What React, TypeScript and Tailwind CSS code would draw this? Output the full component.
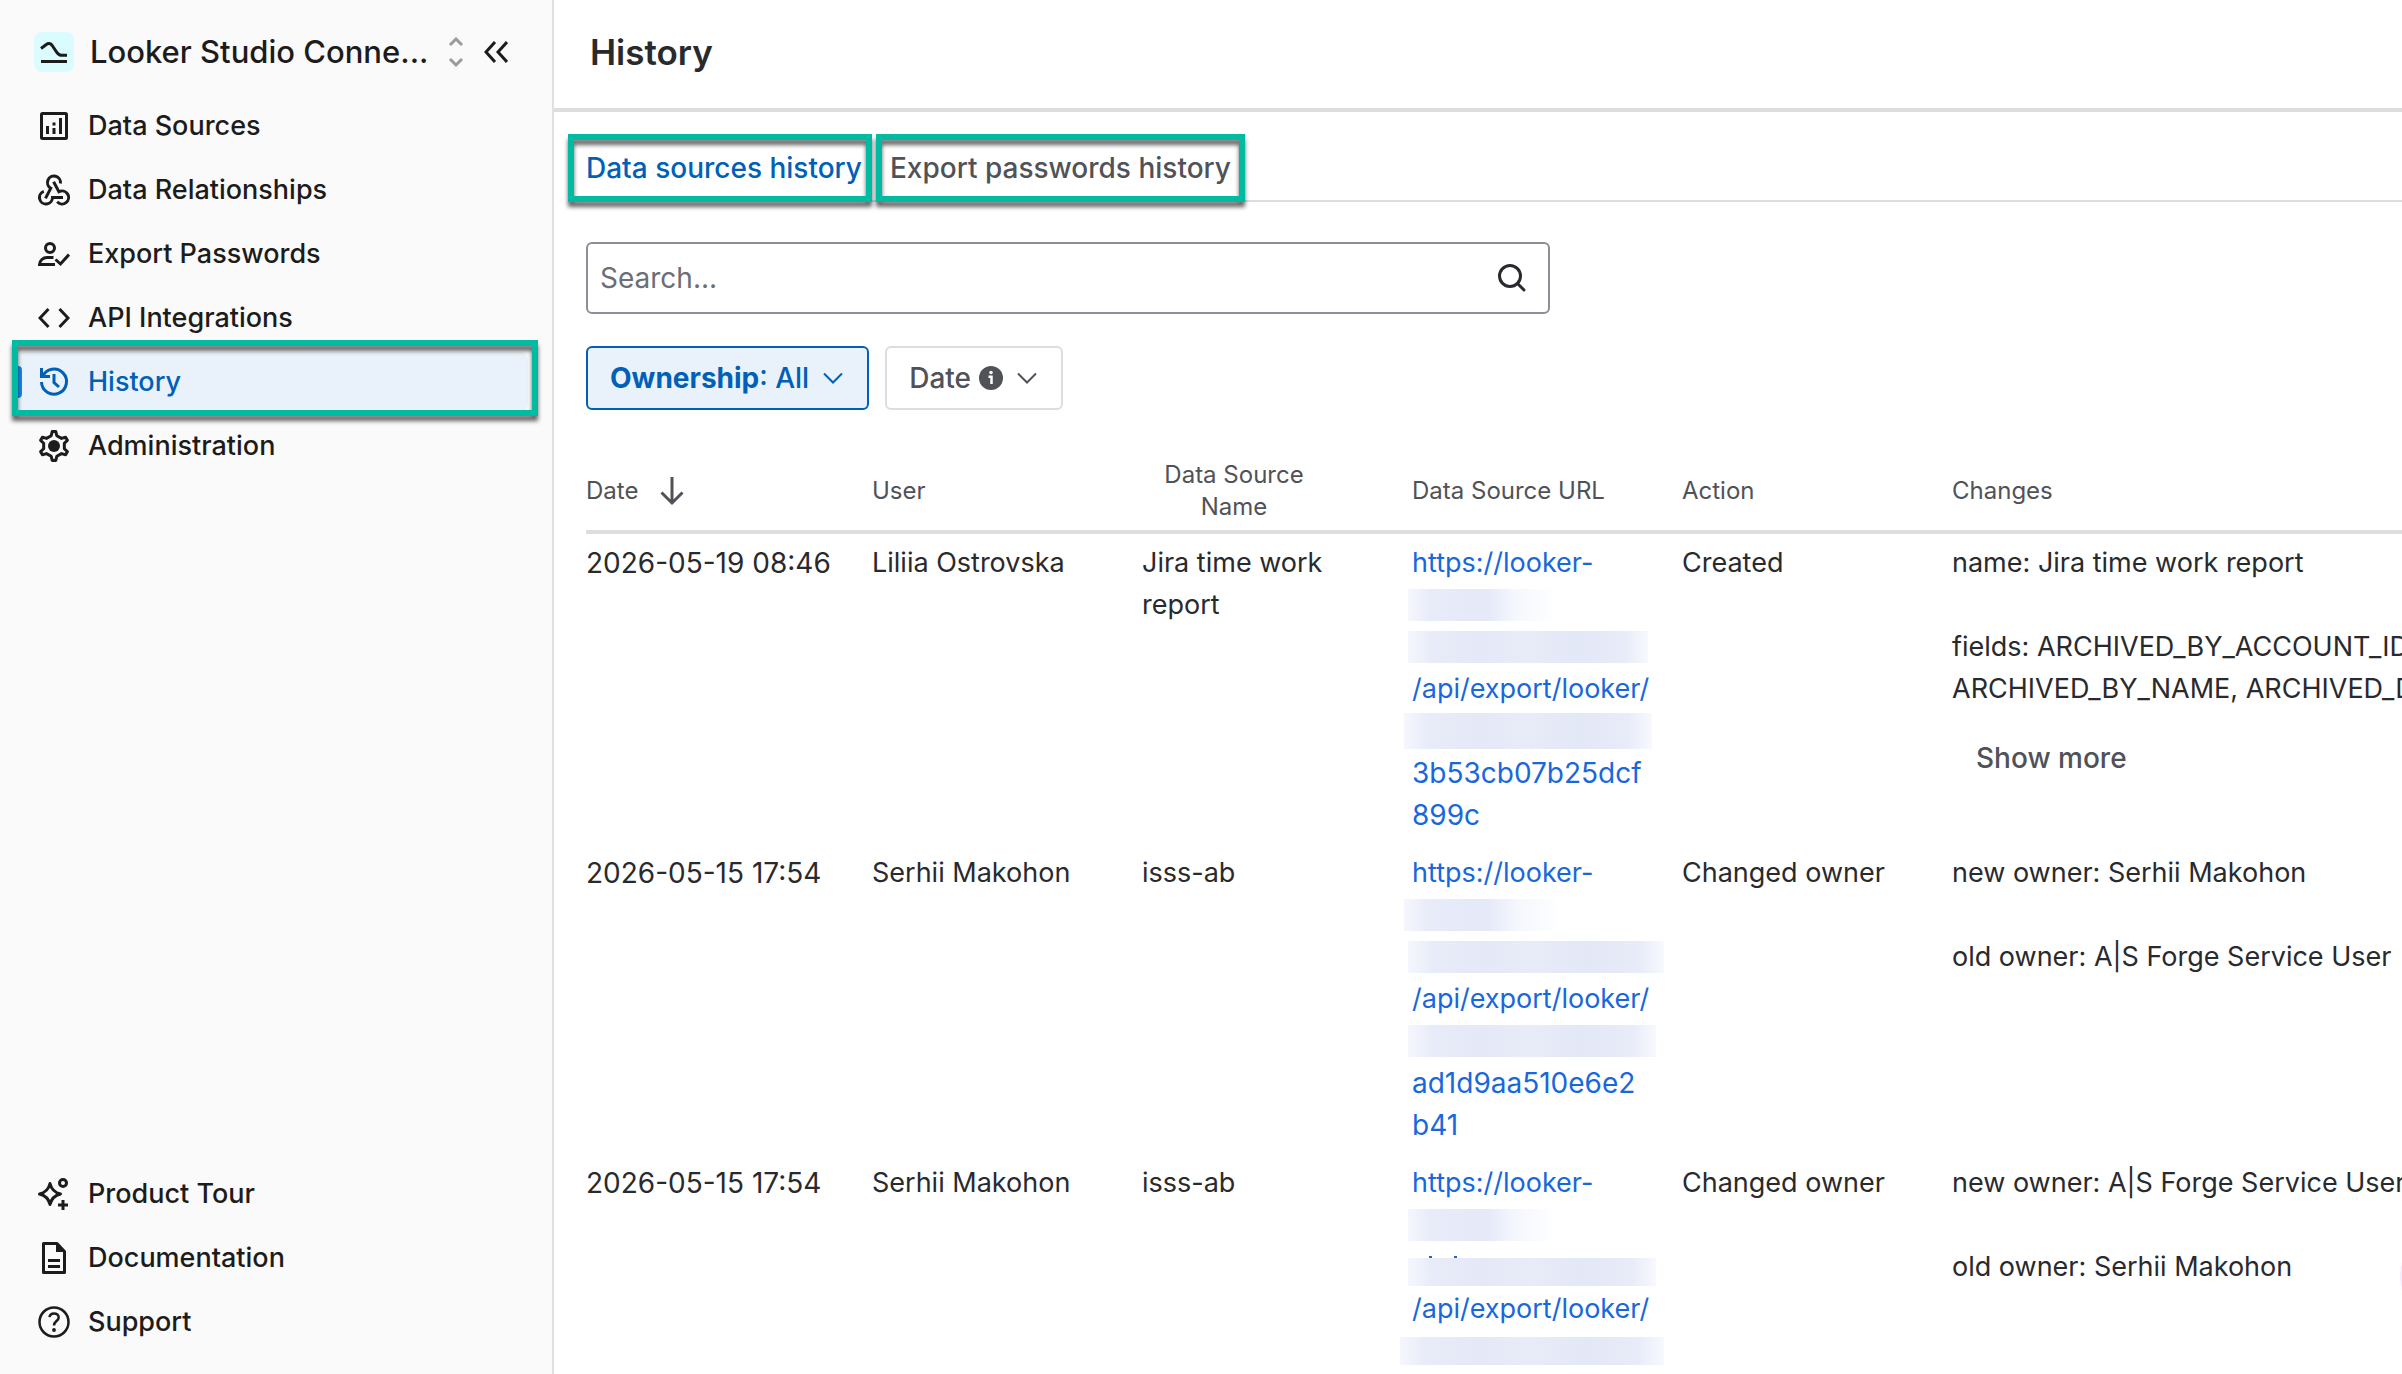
import React from 'react';

type IconProps = { children: React.ReactNode; size?: string; viewBox?: string };

// 16-unit line icon, drawn in the current text colour
const Glyph: React.FC<IconProps> = ({ children, size = 'size-8', viewBox = '0 0 16 16' }) => (
    <svg
        className={`${size} shrink-0`}
        viewBox={viewBox}
        fill="none"
        stroke="currentColor"
        strokeWidth={1.5}
        aria-hidden="true"
    >
        {children}
    </svg>
);

const ChartIcon = () => (
    <Glyph>
        <rect x="1.75" y="1.75" width="12.5" height="12.5" rx="0.5" />
        <path d="M4.75 8v4M8 9v3M8 6.25v1.5M11.25 4v8" />
    </Glyph>
);

const RelationsIcon = () => (
    <Glyph viewBox="0 0 32 32">
        <g strokeWidth="3">
            <path d="M25 23.5H14.5A6.5 6.5 0 1 1 5.8 17.4" />
            <path d="M7.5 24.4 12.8 14.2A6.5 6.5 0 1 1 22.4 9.5" />
            <path d="m15.6 7.7 5.3 10.1a6.5 6.5 0 1 1-1.7 10" />
        </g>
    </Glyph>
);

const PersonCheckIcon = () => (
    <Glyph>
        <circle cx="6" cy="5" r="2.25" />
        <path d="M7.75 9.75H4.5a3.75 3.75 0 0 0-3.75 3.5h7.75" />
        <path d="m8.75 10.75 2.5 2.25 4.25-4.75" />
    </Glyph>
);

const CodeIcon = () => (
    <Glyph>
        <path d="M5.25 3.5 1 8l4.25 4.5M10.75 3.5 15 8l-4.25 4.5" />
    </Glyph>
);

const ClockBackIcon = () => (
    <Glyph>
        <path d="M1.75 1v4.25H6" />
        <path d="M2.3 5.25A6.25 6.25 0 1 1 1.75 8" />
        <path d="M8 4v4.25l2.5 2.25" />
    </Glyph>
);

const GearIcon = () => (
    <Glyph>
        <path
            strokeLinejoin="round"
            d="M7.1.8H8.9L9.4 2.85 11.76 4.21 13.79 3.62 14.69 5.18 13.16 6.63V9.37L14.69 10.82 13.79 12.38 11.76 11.79 9.4 13.15 8.9 15.2H7.1L6.6 13.15 4.24 11.79 2.21 12.38 1.31 10.82 2.84 9.37V6.63L1.31 5.18 2.21 3.62 4.24 4.21 6.6 2.85z"
        />
        <circle cx="8" cy="8" r="3" fill="currentColor" stroke="none" />
    </Glyph>
);

const SparkleIcon = () => (
    <Glyph>
        <path strokeLinejoin="round" d="M6 2.75Q7 7 11.25 8 7 9 6 13.25 5 9 .75 8 5 7 6 2.75z" />
        <circle cx="12.5" cy="2.5" r="1.75" />
        <path d="M12.5 11v5M10 13.5h5" />
    </Glyph>
);

const DocumentIcon = () => (
    <Glyph>
        <path strokeLinejoin="round" d="M9.5.75H2.75v14.5h10.5V4.75z" />
        <path d="M9 .5V5h4.5z" fill="currentColor" stroke="none" />
        <path d="M5 9.25h6M5 12.25h6" />
    </Glyph>
);

const HelpIcon = () => (
    <Glyph>
        <circle cx="8" cy="8" r="7.25" strokeWidth="1.25" />
        <path strokeWidth="1.25" d="M5.75 5.6C5.9 4.4 6.8 3.7 8 3.7c1.3 0 2.35.85 2.35 2.05C10.35 7.5 8 7.6 8 9.7" />
        <circle cx="8" cy="12" r="0.95" fill="currentColor" stroke="none" />
    </Glyph>
);

const ChevronDownIcon = () => (
    <Glyph size="size-6" viewBox="0 0 24 24">
        <path strokeWidth="2" d="m3 7.5 9 9 9-9" />
    </Glyph>
);

// Annotation frame laid over the parts the article talks about
const Highlight: React.FC<{ className: string }> = ({ className }) => (
    <span
        className={`pointer-events-none absolute z-10 border-6 border-[#00bba2] drop-shadow-[0_5px_2px_rgba(0,0,0,0.6)] ${className}`}
    />
);

const navItems = [
    { label: 'Data Sources', icon: ChartIcon },
    { label: 'Data Relationships', icon: RelationsIcon },
    { label: 'Export Passwords', icon: PersonCheckIcon },
    { label: 'API Integrations', icon: CodeIcon },
    { label: 'History', icon: ClockBackIcon, active: true },
    { label: 'Administration', icon: GearIcon },
];

const helpItems = [
    { label: 'Product Tour', icon: SparkleIcon },
    { label: 'Documentation', icon: DocumentIcon },
    { label: 'Support', icon: HelpIcon },
];

interface NavLinkProps {
    label: string;
    icon: React.FC;
    active?: boolean;
}

const NavLink: React.FC<NavLinkProps> = ({ label, icon: Icon, active }) => (
    <li className="relative">
        <a
            href="#"
            aria-current={active ? 'page' : undefined}
            className={`relative flex h-15 items-center gap-[18px] rounded-lg pl-[22px] ${
                active ? 'bg-[#e9f2fb] text-[#0060b8]' : 'text-[#1c1c1c]'
            }`}
        >
            {active && <span className="absolute left-0 top-[14px] h-8 w-[6px] rounded-r bg-[#1687ec]" />}
            <Icon />
            {label}
        </a>
        {active && <Highlight className="-top-3 -bottom-1 -left-1 -right-[10px]" />}
    </li>
);

const Sidebar = () => (
    <aside className="flex w-[554px] shrink-0 flex-col border-r-2 border-[#e0e0e0] bg-[#fafafa] text-[27px] leading-10 font-medium">
        <div className="flex items-center pt-8 pr-11 pb-6 pl-[34px] text-[#1c1c1c]">
            <span className="flex size-10 items-center justify-center rounded-lg bg-[#dafcff]">
                <Glyph size="size-10" viewBox="0 0 40 40">
                    <path
                        strokeWidth="3"
                        d="M7 16.5l5-3.8c2.4-1.8 4.6-1.4 6.2.8l4.6 6.8c1.6 2.4 2.8 3 5.2 3h5M7 29.5h26"
                    />
                </Glyph>
            </span>
            <span className="ml-4 flex-1 text-[31px] whitespace-nowrap">Looker Studio Conne...</span>
            <button type="button" aria-label="Switch app" className="text-[#999]">
                <Glyph size="size-8" viewBox="0 0 32 32">
                    <path strokeWidth="3" d="m10 9 6-6 6 6M10 23l6 6 6-6" />
                </Glyph>
            </button>
            <button type="button" aria-label="Collapse sidebar" className="ml-3">
                <Glyph size="size-6" viewBox="0 0 24 24">
                    <path strokeWidth="3" d="M11 2 2 12l9 10M23 2l-9 10 9 10" />
                </Glyph>
            </button>
        </div>
        <nav className="flex flex-1 flex-col justify-between pr-6 pb-[22px] pl-4">
            <ul className="flex flex-col gap-1">
                {navItems.map((item) => (
                    <NavLink key={item.label} {...item} />
                ))}
            </ul>
            <ul className="flex flex-col gap-1">
                {helpItems.map((item) => (
                    <NavLink key={item.label} {...item} />
                ))}
            </ul>
        </nav>
    </aside>
);

// One line of a URL with its private part smudged out
const Redacted: React.FC<{ className: string; short?: boolean; low?: boolean }> = ({ className, short, low }) => (
    <span className={`flex h-[42px] flex-col ${low ? 'justify-end pb-[2px]' : 'justify-center'}`}>
        {/* a low mask leaves the tips of the tall letters showing */}
        {low && (
            <svg className="ml-4 h-[2px] w-8 shrink-0" viewBox="0 0 32 2" fill="#1868db" aria-hidden="true">
                <path d="M1 0h3v2H1zM26 0h3v2h-3z" />
            </svg>
        )}
        <span
            className={`block shrink-0 ${
                short
                    ? 'bg-[linear-gradient(90deg,#f6f7fd_0%,#e8ebf8_16%,#e5e9f8_55%,#f5f7fd_74%,#fdfeff_100%)]'
                    : 'bg-[linear-gradient(90deg,#f6f7fd_0%,#e8ebf8_10%,#e5e9f7_30%,#e8ebf8_50%,#e3e8f7_70%,#e8ebf8_90%,#f8f9fe_100%)]'
            } ${className}`}
        />
    </span>
);

interface HistoryRow {
    date: string;
    user: string;
    name: string;
    action: string;
    changes: string[];
    expandable?: boolean;
    hash: string[];
    masks: string[];
    lowMask?: boolean;
}

const rows: HistoryRow[] = [
    {
        date: '2026-05-19 08:46',
        user: 'Liliia Ostrovska',
        name: 'Jira time work report',
        action: 'Created',
        changes: [
            'name: Jira time work report',
            'fields: ARCHIVED_BY_ACCOUNT_ID,\nARCHIVED_BY_NAME, ARCHIVED_DATE',
        ],
        expandable: true,
        hash: ['3b53cb07b25dcf', '899c'],
        masks: ['-ml-1 h-8 w-36', '-ml-1 h-8 w-60', '-ml-2 h-9 w-62'],
    },
    {
        date: '2026-05-15 17:54',
        user: 'Serhii Makohon',
        name: 'isss-ab',
        action: 'Changed owner',
        changes: ['new owner: Serhii Makohon', 'old owner: A|S Forge Service User'],
        hash: ['ad1d9aa510e6e2', 'b41'],
        masks: ['-ml-2 h-8 w-38', '-ml-1 h-8 w-64', '-ml-1 h-8 w-62'],
    },
    {
        date: '2026-05-15 17:54',
        user: 'Serhii Makohon',
        name: 'isss-ab',
        action: 'Changed owner',
        changes: ['new owner: A|S Forge Service User', 'old owner: Serhii Makohon'],
        hash: [],
        masks: ['-ml-1 h-8 w-36', '-ml-1 h-7 w-62', '-ml-3 h-7 w-66'],
        lowMask: true,
    },
];

const HistoryTable = () => (
    <table className="mt-10 w-[2006px] table-fixed border-separate border-spacing-0 text-left text-[27px] leading-[42px]">
        <colgroup>
            <col className="w-[286px]" />
            <col className="w-[270px]" />
            <col className="w-[270px]" />
            <col className="w-[270px]" />
            <col className="w-[270px]" />
            <col />
        </colgroup>
        <thead className="text-2xl leading-8 text-[#505258] [&_th]:border-b-4 [&_th]:border-[#dddddd] [&_th]:pt-[9px] [&_th]:pb-[7px] [&_th]:font-normal">
            <tr>
                <th aria-sort="descending">
                    <button type="button" className="flex items-center gap-[18px]">
                        Date
                        <Glyph>
                            <path strokeWidth="1.5" d="M8 1v13M2.75 8.75 8 14l5.25-5.25" />
                        </Glyph>
                    </button>
                </th>
                <th>User</th>
                <th>
                    <span className="block w-[184px] text-center">Data Source Name</span>
                </th>
                <th>Data Source URL</th>
                <th>Action</th>
                <th>Changes</th>
            </tr>
        </thead>
        <tbody className="align-top text-[#292a2e] [&_td]:py-2">
            {rows.map((row, i) => (
                <tr key={i}>
                    <td className="text-[28px]">{row.date}</td>
                    <td>{row.user}</td>
                    <td className="pr-16">{row.name}</td>
                    <td>
                        <a href="#" className="block text-[#1868db]">
                            https://looker-
                            <Redacted short className={row.masks[0]} />
                            <Redacted low={row.lowMask} className={row.masks[1]} />
                            /api/export/looker/
                            <Redacted className={row.masks[2]} />
                            {row.hash.map((part) => (
                                <span key={part} className="block text-[28px]">{part}</span>
                            ))}
                        </a>
                    </td>
                    <td>{row.action}</td>
                    <td>
                        <div className="flex flex-col gap-[42px] whitespace-pre">
                            {row.changes.map((change) => (
                                <p key={change}>{change}</p>
                            ))}
                        </div>
                        {row.expandable && (
                            <button type="button" className="mt-4 h-16 px-6 text-[28px] font-medium text-[#505258]">
                                Show more
                            </button>
                        )}
                    </td>
                </tr>
            ))}
        </tbody>
    </table>
);

const App = () => (
    <div className="flex h-screen overflow-hidden bg-white font-['Inter',sans-serif]">
        <Sidebar />
        <main className="min-w-0 flex-1 overflow-hidden">
            <header className="border-b-4 border-[#dddddd] pt-8 pb-9 pl-9">
                <h1 className="text-[35px] leading-10 font-semibold text-[#292a2e]">History</h1>
            </header>

            <div className="pt-6 pl-8">
                <div role="tablist" className="flex gap-7 border-b-2 border-[#dddddd] text-[28px] font-medium">
                    <button type="button" role="tab" aria-selected="true" className="relative h-16 text-[#0060b8]">
                        Data sources history
                        <Highlight className="-inset-y-[2px] -left-[18px] -right-[10px]" />
                    </button>
                    <button type="button" role="tab" aria-selected="false" className="relative h-16 text-[#505258]">
                        Export passwords history
                        <Highlight className="-inset-y-[2px] -left-[14px] -right-[14px]" />
                    </button>
                </div>

                <div className="mt-10 flex h-18 w-[964px] items-center rounded-md border-2 border-[#8c8f97] pr-5 pl-3 text-[#292a2e]">
                    <input
                        type="text"
                        aria-label="Search history"
                        placeholder="Search..."
                        className="min-w-0 flex-1 text-[28px] outline-none placeholder:text-[#6b6e76]"
                    />
                    <Glyph>
                        <circle cx="7" cy="7" r="5.25" />
                        <path strokeLinecap="round" d="m10.75 10.75 3.25 3.25" />
                    </Glyph>
                </div>

                <div className="mt-8 flex gap-4 text-[28px] font-medium">
                    <button
                        type="button"
                        className="flex h-16 items-center gap-3 rounded-md border-2 border-[#0060b8] bg-[#e9f2fb] px-[22px] text-[#0060b8]"
                    >
                        <span>
                            <b className="font-bold">Ownership</b>: All
                        </span>
                        <ChevronDownIcon />
                    </button>
                    <button
                        type="button"
                        className="flex h-16 items-center gap-3 rounded-md border-2 border-[#dddddd] px-[22px] text-[#505258]"
                    >
                        <span className="flex items-center gap-2">
                            Date
                            <Glyph size="size-6" viewBox="0 0 24 24">
                                <circle cx="12" cy="12" r="12" fill="currentColor" stroke="none" />
                                <circle cx="12" cy="6.5" r="1.75" fill="white" stroke="none" />
                                <path stroke="white" strokeWidth="2.5" d="M9.5 10.75h3V18" />
                            </Glyph>
                        </span>
                        <ChevronDownIcon />
                    </button>
                </div>

                <HistoryTable />
            </div>
        </main>

        {/* Help bubble, tucked away past the right edge */}
        <button
            type="button"
            aria-label="Open help"
            className="fixed -right-[94px] bottom-[50px] size-24 rounded-full bg-[#f3edff]"
        />
    </div>
);

export default App;
